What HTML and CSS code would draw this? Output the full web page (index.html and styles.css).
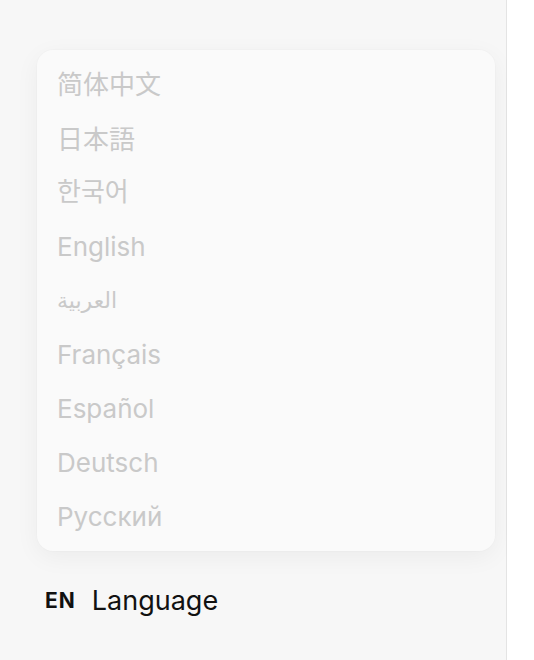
FILE: index.html
```html
<!DOCTYPE html>
<html lang="en">
<head>
<meta charset="utf-8">
<link rel="stylesheet" href="styles.css">
</head>
<body>
<div class="page">
  <aside class="sidebar">
    <ul class="menu">
      <li class="item cjk sc" lang="zh-CN">简体中文</li>
      <li class="item cjk jp" lang="ja">日本語</li>
      <li class="item cjk kr" lang="ko">한국어</li>
      <li class="item">English</li>
      <li class="item arabic" lang="ar">العربية</li>
      <li class="item">Français</li>
      <li class="item">Español</li>
      <li class="item">Deutsch</li>
      <li class="item">Русский</li>
    </ul>
    <div class="lang-btn">
      <span class="code">EN</span>
      <span class="label">Language</span>
    </div>
  </aside>
  <main class="content"></main>
</div>
</body>
</html>
```

FILE: styles.css
```css
html, body {
  margin: 0;
  padding: 0;
  height: 100%;
}
body {
  font-family: Inter, "Noto Sans", "Noto Sans CJK SC", sans-serif;
  background: #ffffff;
}
.page {
  display: flex;
  height: 660px;
}
.sidebar {
  width: 507px;
  flex: none;
  background: #f7f7f7;
  border-right: 1px solid #e4e4e4;
  padding: 50px 11px 0 37px;
  box-sizing: border-box;
  display: flex;
  flex-direction: column;
}
.content {
  flex: 1;
  background: #ffffff;
}
.menu {
  list-style: none;
  margin: 0;
  padding: 7px 20px 8px;
  background: #fafafa;
  border-radius: 16px;
  box-shadow: 0 6px 24px rgba(0, 0, 0, 0.05), 0 0 0 1px rgba(0, 0, 0, 0.012);
}
.item {
  height: 54px;
  display: flex;
  align-items: center;
  font-size: 26px;
  color: #c9c9c9;
}
.cjk {
  box-sizing: border-box;
}
.sc { font-family: "Noto Sans CJK SC", sans-serif; padding-bottom: 3px; }
.jp { font-family: "Noto Sans CJK JP", sans-serif; padding-bottom: 2px; }
.kr { font-family: "Noto Sans CJK KR", sans-serif; padding-bottom: 5px; }
.arabic {
  font-family: "DejaVu Sans", "Noto Sans", sans-serif;
  font-size: 22px;
}
.lang-btn {
  display: flex;
  align-items: center;
  gap: 16px;
  margin-top: 33px;
  padding-left: 8px;
  color: #111111;
}
.code {
  font-size: 21px;
  font-weight: 700;
  letter-spacing: 1px;
}
.label {
  font-size: 27px;
}
```
